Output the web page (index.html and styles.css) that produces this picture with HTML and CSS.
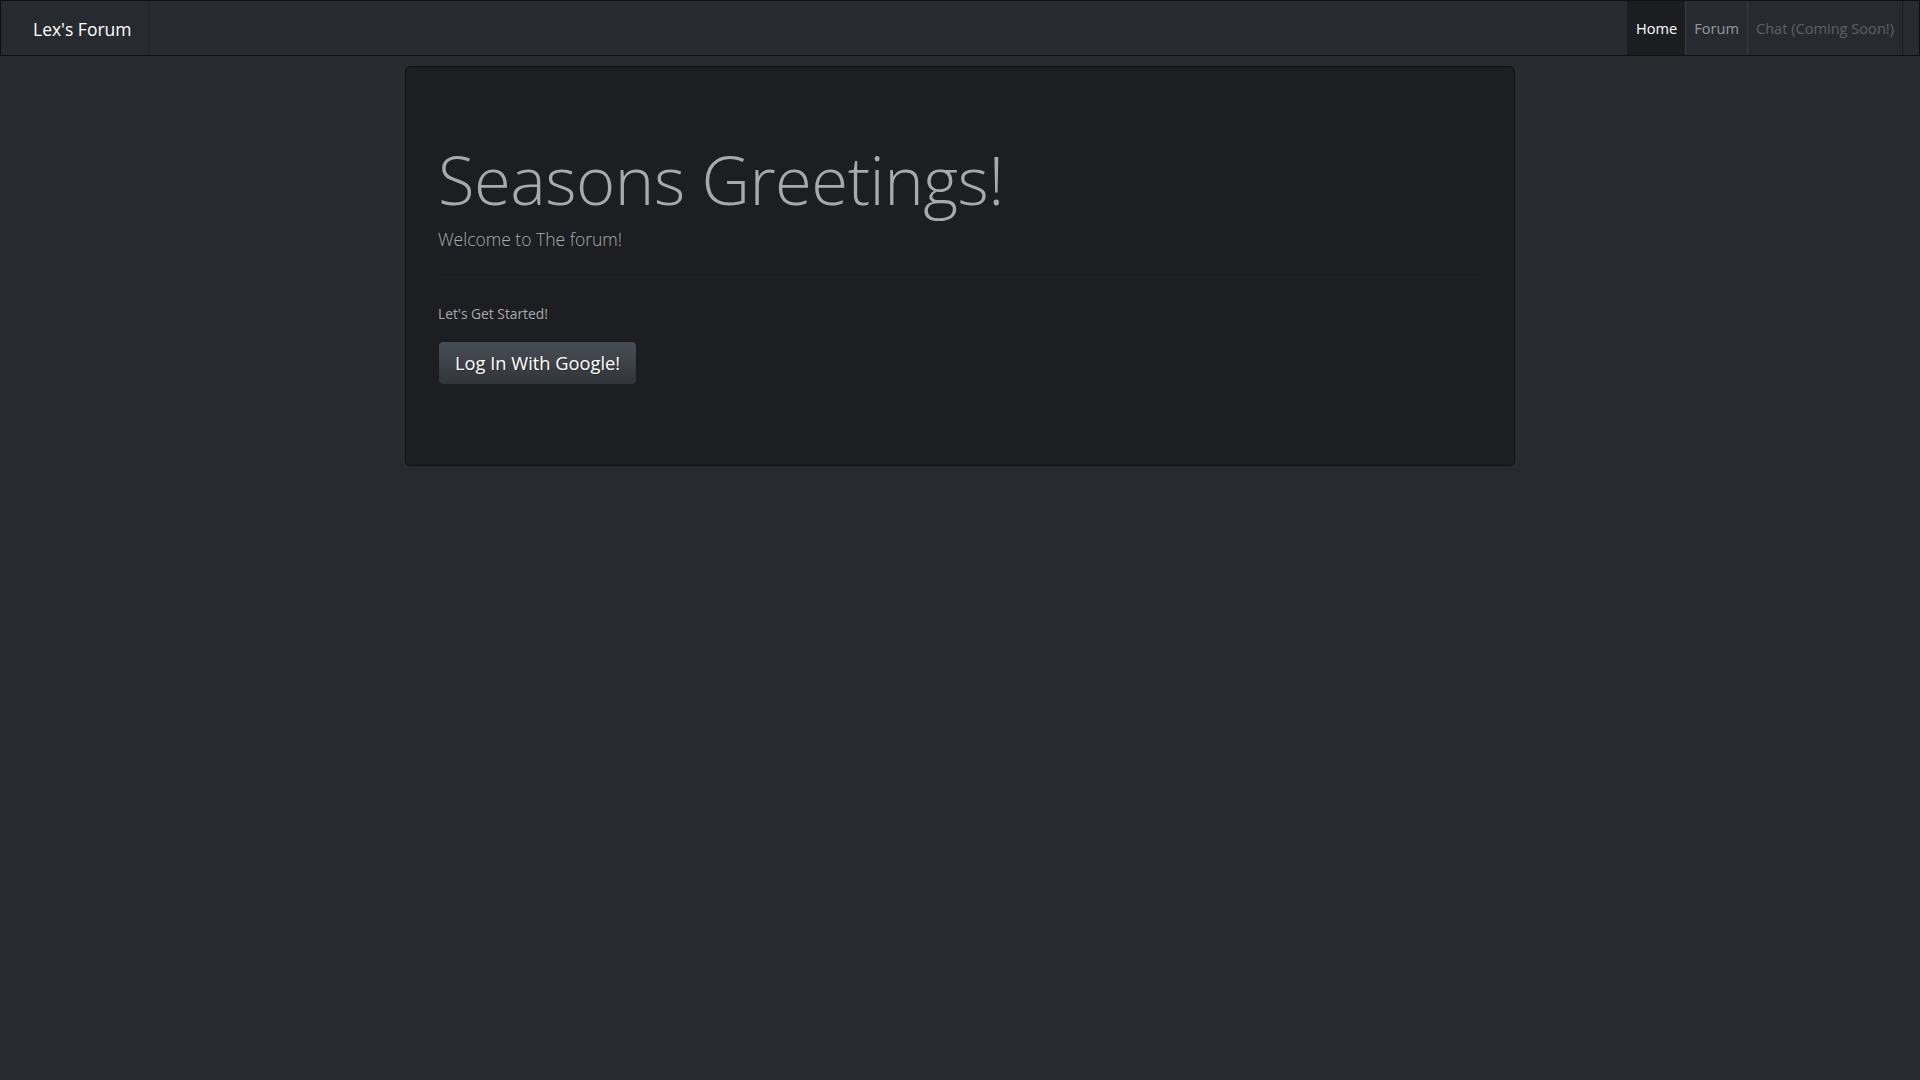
FILE: index.html
```html
<!DOCTYPE html>
<html lang="en">
<head>
<meta charset="utf-8">
<title>Lex's Forum</title>
<link rel="stylesheet" href="styles.css">
</head>
<body>
<nav class="navbar">
  <a class="brand" href="#">Lex's Forum</a>
  <ul class="nav">
    <li class="nav-item active"><a class="nav-link" href="#">Home</a></li>
    <li class="nav-item"><a class="nav-link" href="#">Forum</a></li>
    <li class="nav-item disabled"><a class="nav-link" href="#">Chat (Coming Soon!)</a></li>
  </ul>
</nav>
<main class="container">
  <section class="jumbotron">
    <h1 class="display">Seasons Greetings!</h1>
    <p class="lead">Welcome to The forum!</p>
    <hr class="divider">
    <p class="small-text">Let's Get Started!</p>
    <p class="lead action"><a class="btn" href="#">Log In With Google!</a></p>
  </section>
</main>
</body>
</html>
```

FILE: styles.css
```css
* { box-sizing: border-box; }

html, body {
  margin: 0;
  padding: 0;
}

body {
  background: #272b30;
  color: #aaaaaa;
  font-family: "Open Sans", "Noto Sans", sans-serif;
  font-size: 15px;
  line-height: 1.5;
  min-height: 1080px;
}

a { text-decoration: none; }

.navbar {
  display: flex;
  align-items: stretch;
  justify-content: space-between;
  height: 56px;
  padding: 0 16px;
  background: #272b30;
  border: 1px solid #0f1012;
}

.brand {
  display: flex;
  align-items: center;
  padding: 2px 16px 0 16px;
  color: #ffffff;
  font-size: 17.5px;
  border-right: 1px solid #202327;
}

.nav {
  display: flex;
  list-style: none;
  margin: 0;
  padding: 0;
  border-left: 1px solid #1b1d21;
  border-right: 1px solid #1b1d21;
}

.nav-item + .nav-item {
  border-left: 1px solid #3a3e44;
}

.nav-link {
  display: flex;
  align-items: center;
  height: 100%;
  padding: 2px 8px 0 8px;
  color: #939aa1;
  font-size: 14.6px;
}

.nav-item.active .nav-link {
  background: #1b1d21;
  color: #ffffff;
}

.nav-item.disabled .nav-link {
  color: #5d6166;
}

.container {
  width: 1110px;
  margin: 10px auto 0;
}

.jumbotron {
  background: #1c1e22;
  border: 1px solid #0f1012;
  border-radius: 5px;
  padding: 64px 32px;
}

.display {
  margin: 0 0 3px;
  padding-top: 5px;
  font-size: 67px;
  font-weight: 300;
  line-height: 86px;
  color: #a9a9a9;
  letter-spacing: -0.5px;
}

.lead {
  margin: 0 0 16px;
  font-size: 17.5px;
  font-weight: 300;
  line-height: 28px;
  color: #aaaaaa;
}

.divider {
  margin: 24px 0;
  border: 0;
  border-top: 1px solid #1f2125;
  height: 0;
}

.small-text {
  margin: 0 0 16px;
  font-size: 13.8px;
  line-height: 23px;
  color: #aaaaaa;
}

.action {
  display: flex;
}

.btn {
  display: inline-block;
  padding: 8px 16px;
  font-size: 18.3px;
  font-weight: 400;
  line-height: 26px;
  color: #ffffff;
  background: linear-gradient(#484e55, #3a3f44 60%, #313539);
  border: 1px solid #1a1c1f;
  border-radius: 5px;
  text-shadow: 1px 1px 1px rgba(0, 0, 0, 0.3);
}
```
